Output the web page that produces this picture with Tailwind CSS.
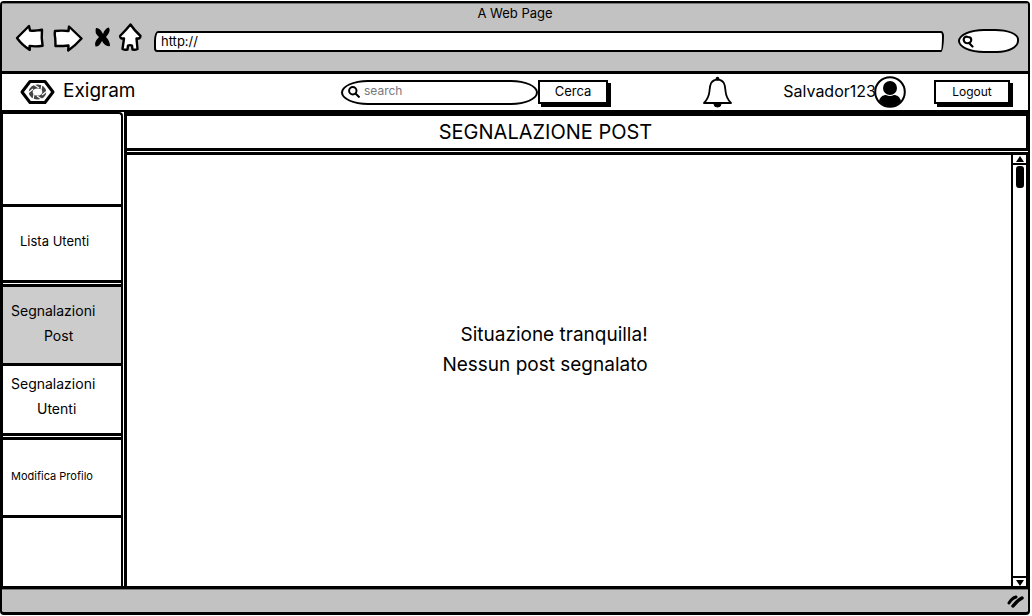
<!DOCTYPE html>
<html lang="it">
<head>
<meta charset="utf-8">
<meta name="viewport" content="width=device-width, initial-scale=1">
<title>Exigram - Segnalazione post</title>
<script src="https://cdn.jsdelivr.net/npm/@tailwindcss/browser@4"></script>
</head>
<body class="bg-white font-[Inter,sans-serif] text-black">
<div class="flex min-h-screen flex-col pt-px pr-[2px] pb-px">
<div class="flex grow flex-col rounded-sm border-2 border-b-[3px] border-black bg-[#c2c2c2]">

  <!-- Browser chrome -->
  <header class="h-[68px] border-t border-[#777]">
    <p class="pt-px text-center text-[13px] leading-4">A Web Page</p>
    <div class="flex items-center pr-[9px] pl-[13px]">
      <button aria-label="Indietro" class="mr-[8px]"><svg width="30" height="30" viewBox="0 0 30 30" fill="#fff" stroke="#000" stroke-width="2.400" stroke-linejoin="round"><path d="M2 16 14 4l1 4.500q6 .6 12-.8-.8 8 .6 16-7 1.200-13 .2l.2 4Q7 23 2 16Z"/></svg></button>
      <button aria-label="Avanti" class="mr-[9px]"><svg width="30" height="30" viewBox="0 0 30 30" fill="#fff" stroke="#000" stroke-width="2.400" stroke-linejoin="round"><path d="M28.500 16.500 16 4.500l-.5 4.500q-7-.8-13.500 0-.6 3 .2 7 .3 4 .3 8 6 .2 13-.5l-.3 5Q22 24 28.500 16.500Z"/></svg></button>
      <button aria-label="Interrompi" class="mr-[6px]"><svg width="20" height="30" viewBox="0 0 20 30"><path d="M4 6q4-.5 7 6 2-6 6-6.500 2 4-3 9.500 4 4 4 9-5 1-8-5-3 6-6.500 5.500-2-4 3.500-9.500-5-4-3-9Z"/></svg></button>
      <button aria-label="Pagina iniziale" class="mr-[12px]"><svg width="24" height="30" viewBox="0 0 24 30" fill="#fff" stroke="#000" stroke-width="2.400" stroke-linejoin="round"><path d="M12.500 2.500Q8 8 2 14q0 3 4 2.500L4.500 27q2 1 5 .6l.5-4q2-1 4 0l.5 4q3 .4 5-.6L18.500 16.500q4 .5 4-2.500Q16 8 12.500 2.500Z"/></svg></button>
      <input aria-label="Indirizzo" value="http://" class="mt-[8px] h-[21px] min-w-0 grow rounded-[4px_3px_3px_3px/10px_5px_16px_4px] border-2 border-black bg-white pl-[5px] text-[13px]">
      <label class="mt-[8px] ml-[14px] flex h-[24px] w-[61px] items-center rounded-[26px_24px_22px_26px/12px_10px_12px_12px] border-2 border-black bg-white pl-[2px]">
        <svg class="shrink-0" width="13" height="13" viewBox="0 0 13 13" fill="none" stroke="#000" stroke-width="2.200" stroke-linecap="round"><path d="M6 2C3 1 1 3 2 6c1 3 6 3 7 0 .8-3-1-4-3-4Z"/><path d="m7 8 3.500 3.500"/></svg>
        <input aria-label="Ricerca nel browser" class="w-full min-w-0 bg-transparent text-xs outline-none">
      </label>
    </div>
  </header>

  <!-- Application bar -->
  <div class="flex h-[39px] items-center border-t-[3px] border-black bg-white pr-[18px] pl-[18px]">
    <svg class="shrink-0" width="35" height="26" viewBox="0 0 35 26">
      <path d="M10 2.500h15L33 13l-8 10.500H10L2 13Z" fill="#fff" stroke="#000" stroke-width="3" stroke-linejoin="round"/>
      <ellipse cx="17.500" cy="13" rx="6.800" ry="5.600" fill="none" stroke="#444" stroke-width="4"/>
      <path d="m13 5 6 4m3-4-1 6m6 1-5 4m1 5-6-4m-4 4 1-6m-6-1 5-4" fill="none" stroke="#fff" stroke-width="1.200"/>
    </svg>
    <a href="#" class="ml-[8px] text-[19px] leading-6 pb-[2px]">Exigram</a>
    <div class="grow-[205] basis-0"></div>
    <label class="flex h-[25px] w-[197px] items-center rounded-[28px/13px] border-2 border-black bg-white pl-[5px]">
      <svg class="shrink-0" width="12" height="12" viewBox="0 0 12 12" fill="none" stroke="#000" stroke-width="2"><circle cx="4.800" cy="4.800" r="3.700"/><path d="m7.500 7.500 4 4"/></svg>
      <input aria-label="Cerca utenti" placeholder="search" class="ml-[4px] w-full min-w-0 bg-transparent pb-[2px] text-[12px] outline-none placeholder:text-[#777780]">
    </label>
    <button class="mb-px h-[24px] w-[70px] border-2 border-black bg-white text-[13px] shadow-[3px_3px_0_#000]">Cerca</button>
    <div class="grow-[93] basis-0"></div>
    <button aria-label="Notifiche"><svg width="32" height="32" viewBox="0 0 32 32"><path d="M13 28a3.500 3 0 0 0 7 0" fill="#000" stroke="#000"/><path d="M16.500 3.500C9 4 9 10 8.500 15c-.5 5-1.500 8-5.500 12h27c-4-4-5-7-5.500-12C24 10 24 4 16.500 3.500Z" fill="#fff" stroke="#000" stroke-width="1.800" stroke-linejoin="round"/><circle cx="16.500" cy="2.500" r="1.800"/></svg></button>
    <div class="grow-[50] basis-0"></div>
    <span class="pb-[2px] text-[16px]">Salvador123</span>
    <svg class="-ml-[2px] shrink-0" width="32" height="32" viewBox="0 0 32 32"><circle cx="16" cy="16" r="14.800" fill="#fff" stroke="#000" stroke-width="2"/><circle cx="16" cy="12" r="7"/><path d="M5 25c1-4 4-6 7-6q4 2 8 0c3 0 6 2 7 6-6 7-16 7-22 0Z"/></svg>
    <div class="grow-[28] basis-0"></div>
    <button class="mb-px h-[24px] w-[76px] border-2 border-black bg-white text-[12px] shadow-[3px_3px_0_#000]">Logout</button>
  </div>

  <!-- Page body -->
  <div class="flex grow border-t-2 border-b-[3px] border-black bg-white">
    <nav class="flex w-[121px] shrink-0 flex-col rounded-tr-sm border-t-2 border-r-2 border-l border-black text-[13px]">
      <div class="h-[90px]"></div>
      <a href="#" class="flex h-[79px] items-center border-y-[3px] border-black pb-[4px] pl-[17px]">Lista Utenti</a>
      <a href="#" aria-current="page" class="mt-px flex h-[79px] flex-col justify-center border-t-[3px] border-black bg-[#cccccc] pb-[5px] pl-[8px] text-[14px] leading-[25px]"><span>Segnalazioni</span><span class="pl-[33px]">Post</span></a>
      <a href="#" class="flex h-[73px] flex-col justify-center border-y-[3px] border-black pb-[8px] pl-[8px] text-[14px] leading-[25px]"><span>Segnalazioni</span><span class="pl-[26px]">Utenti</span></a>
      <a href="#" class="mt-px flex h-[81px] items-center border-y-[3px] border-black pb-[2px] pl-[8px] text-[11px]">Modifica Profilo</a>
    </nav>
    <main class="ml-px flex min-w-0 grow flex-col border-l-[3px] border-black">
      <h1 class="h-[39px] border-t-[4px] border-r-2 border-b-[3px] border-black pr-[62px] text-center text-[20px] leading-[32px]">SEGNALAZIONE POST</h1>
      <div class="mt-px flex grow border-t-[3px] border-black">
        <section class="flex grow items-center justify-center pr-[48px] pb-[42px] text-right text-[19px] leading-[30px]">
          <p>Situazione tranquilla!<br>Nessun post segnalato</p>
        </section>
        <div class="flex w-[17px] flex-col border-x-2 border-black">
          <button aria-label="Scorri in alto" class="flex h-[10px] items-center justify-center border-b-2 border-black"><svg width="10" height="7" viewBox="0 0 10 7"><path d="M5 0 9 6H1Z"/></svg></button>
          <div class="mx-auto mt-px h-[22px] w-[8px] rounded-[3px] bg-black"></div>
          <button aria-label="Scorri in basso" class="mt-auto flex h-[10px] items-center justify-center border-t-2 border-black"><svg width="10" height="7" viewBox="0 0 10 7"><path d="M1 1h8L5 7Z"/></svg></button>
        </div>
      </div>
    </main>
  </div>

  <!-- Status bar -->
  <footer class="flex h-[23px] items-center justify-end border-t border-[#777] pr-[3px]">
    <svg width="18" height="14" viewBox="0 0 18 14" fill="none" stroke="#000" stroke-linecap="round"><path d="M2 9Q5 4 9 3" stroke-width="3"/><path d="M6 12Q11 6 15 4" stroke-width="3.500"/></svg>
  </footer>
</div>
</div>
</body>
</html>
